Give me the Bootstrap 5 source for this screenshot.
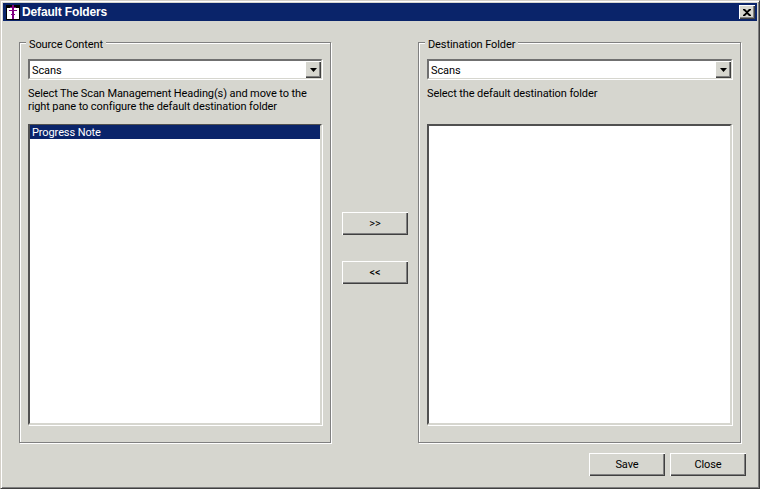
<!DOCTYPE html>
<html lang="en">
<head>
<meta charset="utf-8">
<title>Default Folders</title>
<link href="https://cdn.jsdelivr.net/npm/bootstrap@5.3.0/dist/css/bootstrap.min.css" rel="stylesheet">
<style>
html, body { margin: 0; height: 489px; overflow: hidden; background: #d4d0c8; }
body { font-family: Roboto, "Liberation Sans", Arial, sans-serif; font-size: 11px; line-height: 13px; letter-spacing: -.1px; color: #000; }
.win { width: 760px; height: 489px; background: #d6d6cf; border: 1px solid; border-color: #d4d0c8 #404040 #404040 #d4d0c8; box-shadow: inset 1px 1px 0 #fff, inset -1px -1px 0 #808080; padding: 2px 2px 0 2px; }
.tbar { height: 18px; background: #0a246a; color: #fff; font-weight: 700; padding: 0 2px 0 1px; }
.tbar-gap { gap: 2px; }
.tbar-name { font-family: "Liberation Sans", Arial, sans-serif; font-size: 12px; letter-spacing: -.15px; padding-top: 1px; }
.xbtn { width: 16px; height: 14px; background: #d6d6cf; box-shadow: inset 1px 1px 0 #fff, inset -1px -1px 0 #404040, inset -2px -2px 0 #808080; }
.body-area { padding: 21px 11px 0 16px; }
.grp { position: relative; width: 312px; height: 401px; border: 1px solid #808080; box-shadow: 1px 1px 0 #fff, inset 1px 1px 0 #fff; padding: 16px 8px 0 8px; }
.grp-b { width: 323px; }
.grp-cap { position: absolute; left: 6px; top: -5px; background: #d6d6cf; padding: 0 3px; }
.combo { height: 20px; background: #fff; border-style: solid; border-width: 2px 1px 1px 2px; border-color: #707070 #d6d6cf #d6d6cf #707070; box-shadow: 1px 1px 0 #fff; padding-left: 2px; }
.combo-v { padding-top: 2px; }
.arrow { width: 16px; height: 17px; background: #d6d6cf; box-shadow: inset 1px 1px 0 #fff, inset -1px -1px 0 #404040, inset -2px -2px 0 #808080; }
.hint { margin: 8px 0 0 0; height: 37px; }
.listb { height: 301px; background: #fff; border: 2px solid; border-color: #505050 #d6d6cf #d6d6cf #505050; box-shadow: 1px 1px 0 #fff; }
.sel { height: 14px; margin-top: -1px; background: #0a246a; color: #fff; padding: 1px 0 0 2px; }
.midcol { width: 87px; padding: 170px 0 0 11px; gap: 26px; }
.wbtn { display: flex; align-items: center; justify-content: center; width: 66px; height: 23px; background: #d6d6cf; box-shadow: inset 1px 1px 0 #fff, inset -1px -1px 0 #404040, inset -2px -2px 0 #808080; }
.foot { padding: 10px 0 0 0; gap: 5px; }
.foot .wbtn { width: 76px; }
</style>
</head>
<body>
<div class="win d-flex flex-column">
  <div class="tbar d-flex align-items-center justify-content-between">
    <div class="d-flex align-items-center tbar-gap">
      <svg width="16" height="16" viewBox="0 0 16 16" shape-rendering="crispEdges"><rect x="2" y="1" width="14" height="15" fill="#000"/><rect x="3" y="4" width="12" height="11" fill="#fff"/><path d="M8 1h2v14H8z" fill="#800080"/><path d="M6 3h6v1H6zM5 6h8v1H5z" fill="#800080"/><path d="M7 10h4v1H7z" fill="#800080"/></svg>
      <span class="tbar-name">Default Folders</span>
    </div>
    <div class="xbtn d-flex align-items-center justify-content-center">
      <svg width="8" height="7" viewBox="0 0 8 7"><path d="M0 0h2l2 2 2-2h2v1L5 3.500 8 6v1H6L4 5 2 7H0V6l3-2.500L0 1z" fill="#000"/></svg>
    </div>
  </div>
  <div class="body-area">
    <div class="d-flex">
      <div class="grp">
        <div class="grp-cap">Source Content</div>
        <div class="combo d-flex align-items-center justify-content-between">
          <span class="combo-v">Scans</span>
          <div class="arrow d-flex align-items-center justify-content-center"><svg width="7" height="4" viewBox="0 0 7 4"><path d="M0 0h7L3.500 4z" fill="#000"/></svg></div>
        </div>
        <p class="hint">Select The Scan Management Heading(s) and move to the right pane to configure the default destination folder</p>
        <div class="listb"><div class="sel">Progress Note</div></div>
      </div>
      <div class="midcol d-flex flex-column align-items-start">
        <div class="wbtn">&gt;&gt;</div>
        <div class="wbtn">&lt;&lt;</div>
      </div>
      <div class="grp grp-b">
        <div class="grp-cap">Destination Folder</div>
        <div class="combo d-flex align-items-center justify-content-between">
          <span class="combo-v">Scans</span>
          <div class="arrow d-flex align-items-center justify-content-center"><svg width="7" height="4" viewBox="0 0 7 4"><path d="M0 0h7L3.500 4z" fill="#000"/></svg></div>
        </div>
        <p class="hint">Select the default destination folder</p>
        <div class="listb"></div>
      </div>
    </div>
    <div class="foot d-flex justify-content-end">
      <div class="wbtn">Save</div>
      <div class="wbtn">Close</div>
    </div>
  </div>
</div>
<script src="https://cdn.jsdelivr.net/npm/bootstrap@5.3.0/dist/js/bootstrap.bundle.min.js"></script>
</body>
</html>
